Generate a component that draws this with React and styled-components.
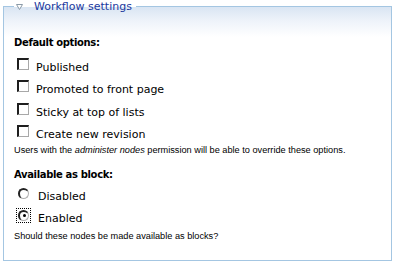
import styled, { createGlobalStyle } from "styled-components";

const GlobalStyle = createGlobalStyle`
  body {
    margin: 0;
    background: #ffffff;
    font-family: "DejaVu Sans", Verdana, sans-serif;
    color: #000000;
  }
`;

const Fieldset = styled.fieldset`
  margin: 0 2px 0 3px;
  padding: 0 10px 0 10px;
  height: 261px;
  box-sizing: border-box;
  border: 1px solid #a4c6e2;
  background: linear-gradient(#d9e5f3 0, #eef3fa 14px, #ffffff 30px);
`;

const Legend = styled.legend`
  display: flex;
  align-items: center;
  gap: 11px;
  margin-left: 0;
  padding: 0 4px 0 2px;
  font-size: 11px;
  line-height: 13px;
  color: #1b3a9e;
`;

const Section = styled.h3`
  margin: 0;
  font-size: 10px;
  letter-spacing: -0.35px;
  font-weight: bold;
  line-height: 13px;
  padding-top: ${(p) => p.top}px;
`;

const Options = styled.div`
  display: flex;
  flex-direction: column;
  padding: ${(p) => p.top}px 0 0 3px;
`;

const Row = styled.label`
  display: flex;
  align-items: flex-start;
  gap: ${(p) => p.gap || 8}px;
  height: ${(p) => p.h}px;
  font-size: 11px;
  line-height: 13px;
`;

const Box = styled.span`
  width: 12px;
  height: 12px;
  box-sizing: border-box;
  background: #ffffff;
  border-style: solid;
  border-width: 2px 1px 1px 2px;
  border-color: #1e1e1e #a8a8a8 #a8a8a8 #1e1e1e;
  margin-top: -3px;
`;

const RadioWrap = styled.span`
  width: 13px;
  height: 13px;
  box-sizing: border-box;
  display: flex;
  align-items: center;
  justify-content: center;
  margin-top: -3px;
  outline: ${(p) => (p.focus ? "1px dotted #000" : "none")};
`;

const Radio = styled.span`
  width: 11px;
  height: 11px;
  box-sizing: border-box;
  border-radius: 50%;
  border-style: solid;
  border-width: 2px 1px 1px 2px;
  border-color: #222 #b0b0b0 #b0b0b0 #222;
  background: #ffffff;
  display: flex;
  align-items: center;
  justify-content: center;
  &::after {
    content: "";
    width: 3px;
    height: 3px;
    border-radius: 50%;
    background: ${(p) => (p.checked ? "#000" : "transparent")};
  }
`;

const Note = styled.p`
  margin: ${(p) => p.top}px 0 0 0;
  font-family: "Liberation Sans", Arial, sans-serif;
  font-size: 9.2px;
  line-height: 11px;
`;

const Triangle = () => (
  <svg width="7" height="6" viewBox="0 0 7 6">
    <path d="M0.5 0.5 H6.5 L3.5 5.5 Z" fill="#ffffff" stroke="#8a9aa8" strokeWidth="1" />
  </svg>
);

const checks = [
  "Published",
  "Promoted to front page",
  "Sticky at top of lists",
  "Create new revision",
];

export default function App() {
  return (
    <>
      <GlobalStyle />
      <Fieldset>
        <Legend>
          <Triangle />
          Workflow settings
        </Legend>
        <Section top={23}>Default options:</Section>
        <Options top={12}>
          {checks.map((c) => (
            <Row key={c} h={22.4} gap={7}>
              <Box />
              {c}
            </Row>
          ))}
        </Options>
        <Note top={-6}>
          Users with the <i>administer nodes</i> permission will be able to
          override these options.
        </Note>
        <Section top={12}>Available as block:</Section>
        <Options top={9}>
          <Row h={22}>
            <RadioWrap>
              <Radio />
            </RadioWrap>
            Disabled
          </Row>
          <Row h={19}>
            <RadioWrap focus>
              <Radio checked />
            </RadioWrap>
            Enabled
          </Row>
        </Options>
        <Note top={0}>Should these nodes be made available as blocks?</Note>
      </Fieldset>
    </>
  );
}
